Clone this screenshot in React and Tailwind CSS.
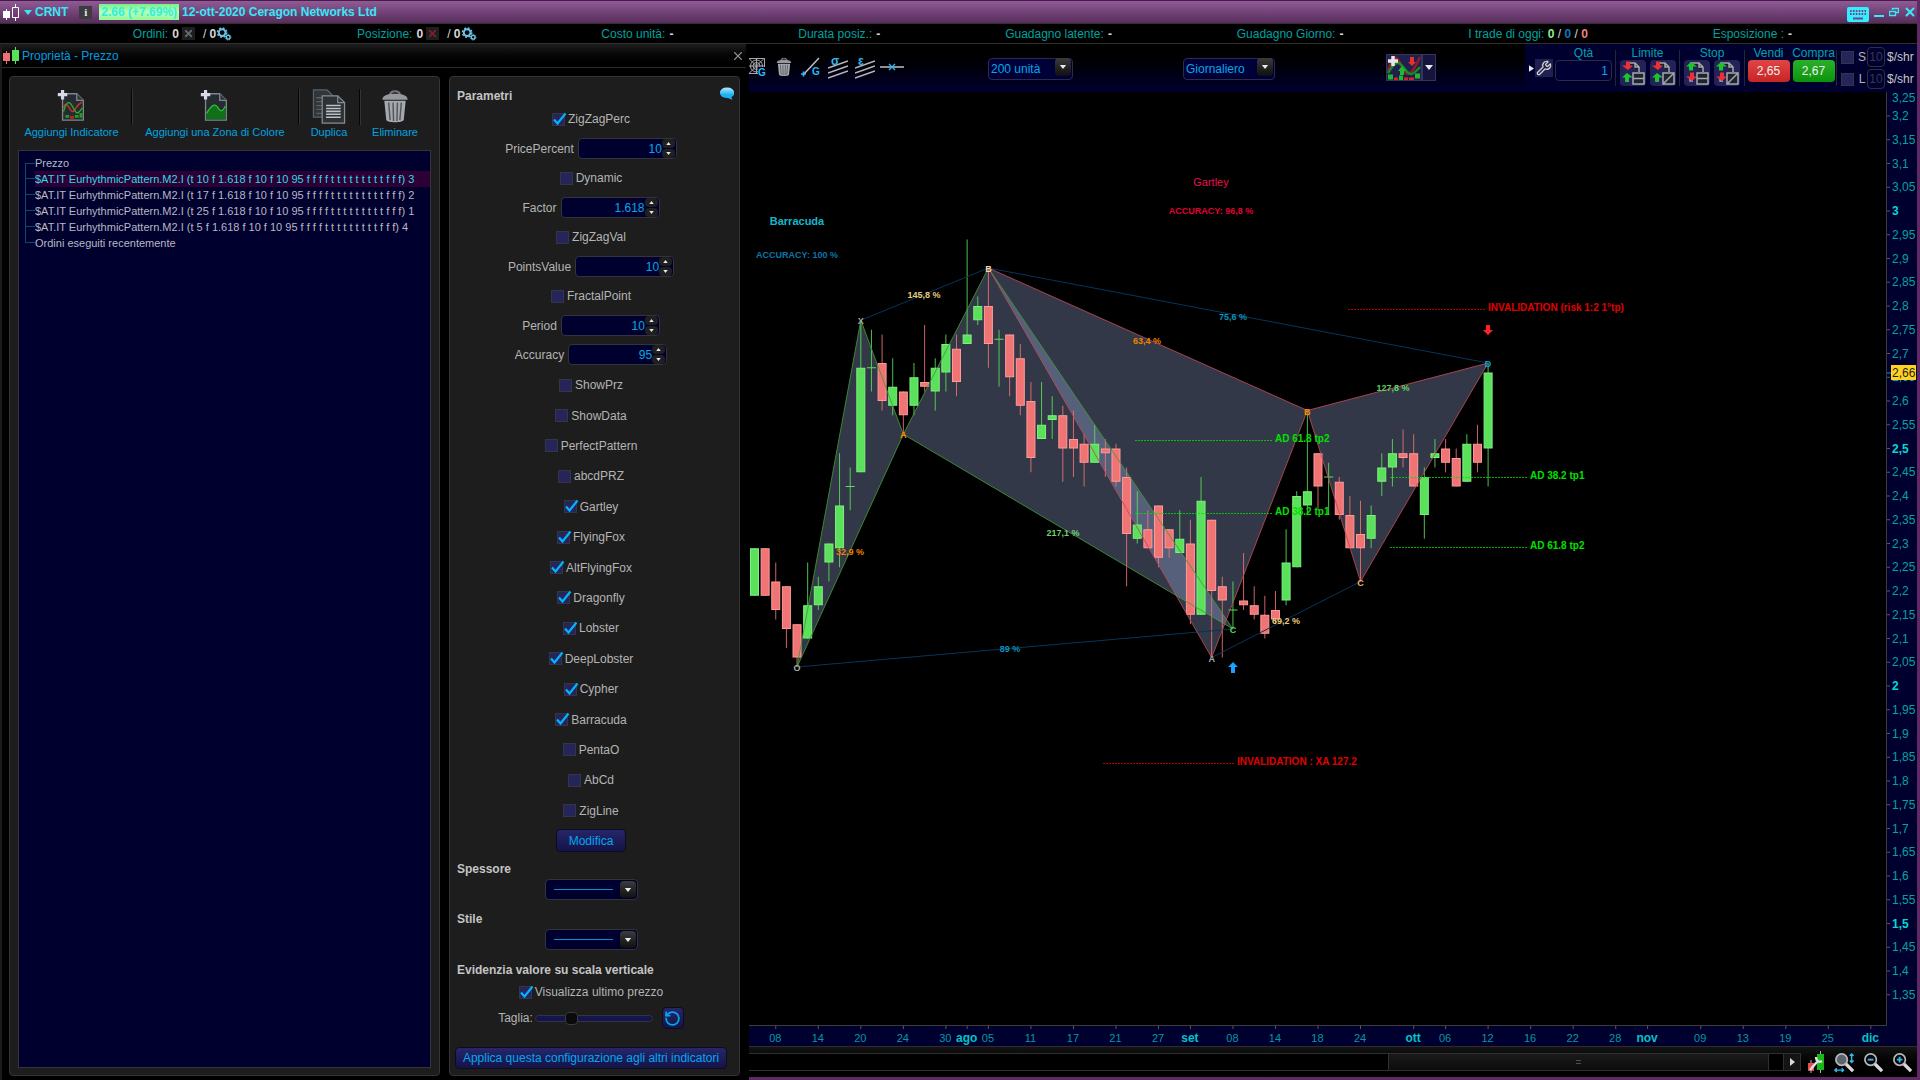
import { useState } from 'react';
import { RotateCcw, Wrench, X } from 'lucide-react';

const START_X = 754.5;
const STEP = 10.632;
const xAt = (i) => START_X + i * STEP;
const yAt = (price) => 211 + (3 - price) * 475;

// open, high, low, close in cents
const CANDLES = [
  [219, 229, 219, 229], [229, 229, 219, 219], [222, 226, 214, 216], [221, 221, 208, 212],
  [213, 213, 204, 206], [210, 226, 210, 217], [217, 223, 216, 221], [226, 230, 222, 230],
  [229, 249, 225, 238], [242, 246, 237, 242], [245, 277, 245, 267], [267, 275, 262, 267],
  [268, 274, 258, 260], [259, 269, 257, 263], [262, 262, 253, 257], [259, 268, 257, 265],
  [264, 276, 262, 263], [262, 269, 258, 267], [266, 274, 262, 272], [271, 274, 261, 264],
  [272, 294, 272, 274], [277, 282, 276, 280], [280, 288, 267, 272], [273, 275, 263, 273],
  [274, 274, 261, 265], [269, 272, 257, 259], [260, 264, 245, 248], [252, 264, 252, 255],
  [256, 261, 252, 257], [257, 259, 243, 250], [252, 258, 244, 250], [251, 253, 242, 247],
  [247, 255, 247, 251], [250, 252, 244, 249], [250, 251, 242, 243], [244, 246, 221, 232],
  [231, 241, 230, 234], [233, 237, 229, 229], [238, 238, 225, 227], [233, 233, 227, 229],
  [228, 237, 228, 231], [230, 235, 213, 215], [215, 244, 215, 239], [235, 235, 206, 220],
  [221, 223, 206, 218], [216, 222, 212, 216], [218, 228, 216, 217], [217, 221, 214, 215],
  [215, 219, 210, 211], [216, 220, 213, 214], [218, 233, 217, 226], [225, 241, 225, 240],
  [238, 258, 236, 241], [249, 249, 237, 242], [244, 247, 236, 244], [243, 244, 235, 236],
  [236, 240, 229, 229], [232, 239, 222, 229], [231, 238, 229, 236], [243, 249, 240, 246],
  [246, 252, 242, 249], [249, 254, 246, 248], [249, 253, 242, 242], [236, 246, 231, 244],
  [248, 252, 246, 249], [250, 252, 245, 247], [248, 250, 242, 242], [243, 253, 243, 251],
  [251, 255, 245, 247], [250, 268, 242, 266],
];

const DATES = [
  [2, '08'], [6, '14'], [10, '20'], [14, '24'], [18, '30'], [20, 'ago'], [22, '05'],
  [26, '11'], [30, '17'], [34, '21'], [38, '27'], [41, 'set'], [45, '08'], [49, '14'],
  [53, '18'], [57, '24'], [62, 'ott'], [65, '06'], [69, '12'], [73, '16'], [77, '22'],
  [81, '28'], [84, 'nov'], [89, '09'], [93, '13'], [97, '19'], [101, '25'], [105, 'dic'],
];

const PRICES = Array.from({ length: 38 }, (_, i) => (320 - i * 5) / 100);

const P = {
  O: [xAt(4), yAt(2.04)],
  X: [xAt(10), yAt(2.77)],
  A: [xAt(14), yAt(2.53)],
  B: [xAt(22), yAt(2.88)],
  C: [xAt(45), yAt(2.12)],
  A2: [xAt(43), yAt(2.06)],
  B2: [xAt(52), yAt(2.58)],
  C2: [xAt(57), yAt(2.22)],
  D: [xAt(69), yAt(2.68)],
};
const pts = (...keys) => keys.map((k) => P[k].join(',')).join(' ');

const POINT_LABELS = [
  ['O', 'O', '#a9a9a9'], ['X', 'X', '#a9a9a9'], ['A', 'A', '#ff8c00'], ['B', 'B', '#f0d8a8'],
  ['C', 'C', '#5ad65a'], ['A2', 'A', '#a9a9a9'], ['B2', 'B', '#ff8c00'], ['C2', 'C', '#e8b860'],
  ['D', 'D', '#00a0d8'],
];

const RATIOS = [
  [924, 298, '145,8 %', '#e8c878'],
  [850, 555, '32,9 %', '#f08000'],
  [1063, 536, '217,1 %', '#6fce6f'],
  [1010, 652, '89 %', '#0b93b8'],
  [1233, 320, '75,6 %', '#0b93b8'],
  [1147, 344, '63,4 %', '#f08000'],
  [1393, 391, '127,8 %', '#5fd35f'],
  [1286, 624, '69,2 %', '#e8c878'],
];

const LEVELS = [
  [1348, 1485, 309, 'INVALIDATION (risk 1:2 1°tp)', '#e00000', 1488],
  [1103, 1234, 763, 'INVALIDATION : XA 127.2', '#e00000', 1237],
  [1135, 1272, 440, 'AD 61.8 tp2', '#00e000', 1275],
  [1135, 1272, 513, 'AD 38.2 tp1', '#00e000', 1275],
  [1390, 1527, 477, 'AD 38.2 tp1', '#00e000', 1530],
  [1390, 1527, 547, 'AD 61.8 tp2', '#00e000', 1530],
];

function Candle({ index, data }) {
  const [open, high, low, close] = data.map((v) => v / 100);
  const x = xAt(index);
  const up = close >= open;
  const color = up ? '#5be05b' : '#f07474';
  const edge = up ? '#7df07d' : '#ff9a9a';
  const top = yAt(Math.max(open, close));
  const bottom = yAt(Math.min(open, close));
  return (
    <g>
      <line x1={x} x2={x} y1={yAt(high)} y2={yAt(low)} stroke={color} strokeOpacity="0.85" />
      {open === close ? (
        <line x1={x - 4.5} x2={x + 4.5} y1={top} y2={top} stroke={color} />
      ) : (
        <rect x={x - 4} y={top + 0.5} width="8" height={bottom - top - 1} fill={color} stroke={edge} />
      )}
    </g>
  );
}

function Chart() {
  return (
    <svg
      className="block h-full w-full font-['Liberation_Sans',sans-serif]"
      viewBox="749 92 1168 954"
      preserveAspectRatio="xMinYMin slice"
    >
      <rect x="749" y="92" width="1168" height="954" fill="#00002e" />
      <rect x="748.5" y="91.5" width="1138" height="934" fill="#000" stroke="#3c3c3c" />

      <g fill="#b3c8fe" fillOpacity="0.28">
        <polygon points={pts('O', 'X', 'A')} />
        <polygon points={pts('A', 'B', 'C')} />
        <polygon points={pts('B', 'A2', 'B2')} />
        <polygon points={pts('B2', 'C2', 'D')} />
      </g>

      {CANDLES.map((c, i) => (
        <Candle key={i} index={i} data={c} />
      ))}

      <g fill="none" stroke="#06355a">
        <polyline points={pts('X', 'B')} />
        <polyline points={pts('B', 'D')} />
        <polyline points={pts('O', 'C')} />
        <polyline points={pts('A2', 'C2')} />
      </g>
      <g fill="none" stroke="#3f9a35" strokeOpacity="0.85">
        <polygon points={pts('O', 'X', 'A')} />
        <polygon points={pts('A', 'B', 'C')} />
      </g>
      <g fill="none" stroke="#c04a58" strokeOpacity="0.85">
        <polygon points={pts('B', 'A2', 'B2')} />
        <polygon points={pts('B2', 'C2', 'D')} />
      </g>

      <g className="text-[10px] font-bold">
        {LEVELS.map(([x1, x2, y, label, color, tx]) => (
          <g key={`${tx}-${y}`}>
            <line x1={x1} x2={x2} y1={y + 0.5} y2={y + 0.5} stroke={color} strokeOpacity="0.8" strokeDasharray="2 1" />
            <text x={tx} y={y + 2} fill={color}>{label}</text>
          </g>
        ))}
      </g>

      <g className="text-[9px] font-bold" textAnchor="middle">
        {RATIOS.map(([x, y, label, color]) => (
          <text key={label} x={x} y={y} fill={color}>{label}</text>
        ))}
        <text x="797" y="258" fill="#0b76a8">ACCURACY: 100 %</text>
        <text x="1211" y="214" fill="#e00030">ACCURACY: 96,8 %</text>
        {POINT_LABELS.map(([key, label, color]) => (
          <text key={key} x={P[key][0]} y={P[key][1] + 4} fill={color}>{label}</text>
        ))}
      </g>
      <g className="text-[11px]" textAnchor="middle">
        <text x="797" y="225" fill="#14b8cc" className="font-bold">Barracuda</text>
        <text x="1211" y="186" fill="#e8104c">Gartley</text>
      </g>
      <path d="M1233 662l5 5h-3v6h-4v-6h-3z" fill="#1aa0ff" />
      <path d="M1488 335l5-5h-3v-5h-4v5h-3z" fill="#ff2222" />

      <g className="text-[12px]">
        <text x="1892" y="102" fill="#00a4a4">3,25</text>
        {PRICES.map((p) => {
          const major = p % 0.5 === 0;
          return (
            <g key={p}>
              <line x1="1887" x2="1890" y1={yAt(p)} y2={yAt(p)} stroke="#5a5a5a" />
              <text
                x="1892"
                y={yAt(p) + 4}
                fill={major ? '#00d8d8' : '#00a4a4'}
                className={major ? 'font-bold' : ''}
              >
                {String(p).replace('.', ',')}
              </text>
            </g>
          );
        })}
        <line x1="1887" x2="1891" y1="373" y2="373" stroke="#00a0c8" />
        <rect x="1891" y="365" width="25" height="15" fill="#ffd21f" />
        <text x="1892" y="377" fill="#1c1c1c">2,66</text>
      </g>

      <g textAnchor="middle">
        {DATES.map(([i, label]) => {
          const month = label.length === 3;
          return (
            <g key={i}>
              <line x1={xAt(i)} x2={xAt(i)} y1="1026" y2="1029" stroke="#5a5a5a" />
              <text
                x={xAt(i) - 0.5}
                y="1042"
                fill={month ? '#00c4c8' : '#009aa2'}
                className={month ? 'text-[12px] font-bold' : 'text-[11px]'}
              >
                {label}
              </text>
            </g>
          );
        })}
      </g>
    </svg>
  );
}

function Check({ id, label, checked = false }) {
  return (
    <label className="flex items-center justify-center gap-[3px] text-[#b4b4b4]" htmlFor={id}>
      <span className="relative flex h-[13px] w-[13px]">
        <input
          id={id}
          type="checkbox"
          defaultChecked={checked}
          className="peer h-[13px] w-[13px] appearance-none border border-[#35354a] bg-[#25255a]"
        />
        <svg
          className="pointer-events-none absolute -top-px left-0 hidden h-[14px] w-[15px] peer-checked:block"
          viewBox="0 0 15 14"
          fill="none"
          stroke="#00b4ff"
          strokeWidth="2.2"
        >
          <path d="M2 7.5l3.5 4L13.5 1.5" />
        </svg>
      </span>
      {label}
    </label>
  );
}

function Spinner({ id, label, value }) {
  const [text, setText] = useState(value);
  const places = value.includes('.') ? 3 : 0;
  const bump = (d) => setText((t) => (Number(t) + d).toFixed(places));
  return (
    <div className="flex h-[29px] items-center justify-center gap-1">
      <label htmlFor={id} className="text-[#b4b4b4]">{label}</label>
      <div className="flex h-[21px] w-[99px] items-center rounded-sm border border-[#33333c] bg-[#00002e] pr-px">
        <input
          id={id}
          value={text}
          onChange={(e) => setText(e.target.value)}
          className="w-full min-w-0 bg-transparent text-right text-[#00a8e8] outline-none"
        />
        <div className="flex flex-col gap-px">
          {[1, -1].map((d) => (
            <button
              key={d}
              type="button"
              aria-label={`${label} ${d > 0 ? '+' : '-'}`}
              onClick={() => bump(d)}
              className="flex h-[9px] w-[13px] items-center justify-center rounded-sm bg-[#202022]"
            >
              <svg viewBox="0 0 6 4" className="h-[3px] w-[5px] fill-[#e8e8e8]">
                <path d={d > 0 ? 'M0 4l3-4 3 4z' : 'M0 0l3 4 3-4z'} />
              </svg>
            </button>
          ))}
        </div>
      </div>
    </div>
  );
}

function ArrowBox() {
  return (
    <span className="pointer-events-none absolute top-[2px] right-[2px] bottom-[2px] flex w-[16px] items-center justify-center rounded-sm bg-gradient-to-b from-[#3c3c3c] to-[#101010]">
      <svg viewBox="0 0 8 5" className="h-[4px] w-[8px] fill-[#e8e8e8]">
        <path d="M0 0h8L4 5z" />
      </svg>
    </span>
  );
}

function LineSelect({ label }) {
  return (
    <div className="relative mx-auto h-[21px] w-[93px]">
      <select aria-label={label} className="h-full w-full appearance-none rounded-sm border border-[#33333c] bg-[#00002e]">
        <option value="1" />
      </select>
      <span className="pointer-events-none absolute top-[10px] left-[9px] h-px w-[59px] bg-[#0094d0]" />
      <ArrowBox />
    </div>
  );
}

function TextSelect({ label, value, className }) {
  return (
    <div className={`relative h-[22px] shrink-0 ${className}`}>
      <select
        aria-label={label}
        className="h-full w-full appearance-none rounded-sm border border-[#2c2c48] bg-[#000038] pl-[2px] text-[12px] text-[#00a8e8]"
      >
        <option>{value}</option>
      </select>
      <ArrowBox />
    </div>
  );
}

function PageIcon({ children }) {
  return (
    <svg viewBox="0 0 30 36" className="h-[34px] w-[30px]" fill="none">
      <path d="M5 5h15l7 7v21H5z" fill="#252b30" stroke="#7c858c" strokeWidth="1.4" />
      <path d="M20 5v7h7" fill="#30363c" stroke="#7c858c" strokeWidth="1.4" />
      {children}
      <path d="M0 6h10M5 1v10" stroke="#d8d8e8" strokeWidth="3.4" />
    </svg>
  );
}

function TrashIcon({ className }) {
  return (
    <svg viewBox="0 0 28 36" className={className} fill="none">
      <path d="M9 6c0-5 10-5 10 0" stroke="#76767e" strokeWidth="2" />
      <path d="M1 11c0-4 5-6 13-6s13 2 13 6z" fill="#96989e" />
      <path d="M3 12h22l-2 20c-1 3-17 3-18 0z" fill="#a5a8ae" />
      <path d="M7.5 14l1.5 18M12 14l.5 19M16.5 14l-.5 19M20.5 14l-1.5 18" stroke="#54565c" strokeWidth="1.5" />
    </svg>
  );
}

function TreePanel() {
  const rows = [
    'Prezzo',
    '$AT.IT EurhythmicPattern.M2.I (t 10 f 1.618 f 10 f 10 95 f f f f t t t t t t t t t f f f) 3',
    '$AT.IT EurhythmicPattern.M2.I (t 17 f 1.618 f 10 f 10 95 f f f f t t t t t t t t t f f f) 2',
    '$AT.IT EurhythmicPattern.M2.I (t 25 f 1.618 f 10 f 10 95 f f f f t t t t t t t t t f f f) 1',
    '$AT.IT EurhythmicPattern.M2.I (t 5 f 1.618 f 10 f 10 95 f f f f t t t t t t t t t f f f) 4',
    'Ordini eseguiti recentemente',
  ];
  const tool = 'flex h-[50px] flex-col items-center justify-between text-[11px] leading-[14px] text-[#00a4e0]';
  const divider = 'h-[36px] w-px bg-[#050505] shadow-[1px_0_0_#333]';
  return (
    <section className="flex w-[431px] flex-col rounded-sm border border-[#353535] bg-[#1d1d1d] px-[8px] pb-[7px]">
      <div className="mt-[12px] -ml-[6px] flex">
        <button type="button" className={`${tool} w-[119px]`}>
          <PageIcon>
            <path d="M6 20c4-12 7 8 11 3s5-8 9-9" stroke="#d03030" strokeWidth="1.5" />
            <path d="M6 24c5-18 9-6 12-1s5 1 8-3" stroke="#28b028" strokeWidth="1.5" />
            <path d="M8 29h4M18 29h4" stroke="#20a020" strokeWidth="3" />
            <path d="M13 30h4" stroke="#c02020" strokeWidth="3" />
            <path d="M23 28h3" stroke="#20a020" strokeWidth="5" />
          </PageIcon>
          Aggiungi Indicatore
        </button>
        <span className={divider} />
        <button type="button" className={`${tool} w-[166px]`}>
          <PageIcon>
            <path d="M6 32V26c7-12 10-10 13-5 2 3 4 3 7-3v14z" fill="#107018" />
            <path d="M6 26c7-12 10-10 13-5 2 3 4 3 7-3" stroke="#30c038" strokeWidth="1.3" />
          </PageIcon>
          Aggiungi una Zona di Colore
        </button>
        <span className={divider} />
        <button type="button" className={`${tool} w-[60px]`}>
          <svg viewBox="0 0 34 36" className="h-[35px] w-[34px]" fill="none" stroke="#858c92" strokeWidth="1.3">
            <path d="M1 1h14l6 6v22H1z" fill="#30363a" stroke="#5a6066" />
            <path d="M4 9h8M4 13h8M4 17h8M4 21h8M4 25h8" stroke="#5a6066" />
            <path d="M10 7h16l7 7v21H10z" fill="#2c3236" />
            <path d="M26 7v7h7" />
            <path d="M14 17h15M14 20h15M14 23h15M14 26h15M14 29h15" stroke="#bcc0c4" strokeWidth="1.6" />
          </svg>
          Duplica
        </button>
        <span className={divider} />
        <button type="button" className={`${tool} w-[70px]`}>
          <TrashIcon className="h-[35px] w-[28px]" />
          Eliminare
        </button>
      </div>
      <ul className="mt-[11px] flex-1 border border-[#34343c] bg-[#00002e] pt-[4px] text-[11px] leading-[16px] whitespace-nowrap text-[#b8b8c4]">
        {rows.map((row, i) => (
          <li key={row} className="flex h-[16px] pl-[6px]">
            <span className="flex w-[10px] flex-col">
              <span
                className={
                  i === 0
                    ? 'mt-[8px] flex-1 border-t border-l border-[#0c4a6c]'
                    : 'h-[8px] border-b border-l border-[#0c4a6c]'
                }
              />
              {i > 0 && i < rows.length - 1 && <span className="flex-1 border-l border-[#0c4a6c]" />}
            </span>
            <span className={i === 1 ? 'flex-1 bg-[#2c0034] text-[#2fd8e8]' : 'flex-1'}>{row}</span>
          </li>
        ))}
      </ul>
    </section>
  );
}

const FLAGS = [
  ['ShowPrz', false], ['ShowData', false], ['PerfectPattern', false], ['abcdPRZ', false],
  ['Gartley', true], ['FlyingFox', true], ['AltFlyingFox', true], ['Dragonfly', true],
  ['Lobster', true], ['DeepLobster', true], ['Cypher', true], ['Barracuda', true],
  ['PentaO', false], ['AbCd', false], ['ZigLine', false],
];

function ParamsPanel() {
  const button = 'rounded-sm border border-[#0c0c20] bg-gradient-to-b from-[#26266a] to-[#141448] text-[#00a8f0]';
  const heading = 'pl-[2px] text-[12px] leading-[16px] font-bold text-[#c4c4c4]';
  return (
    <section className="relative flex w-[291px] flex-col rounded-sm border border-[#353535] bg-[#1d1d1d] pt-[11px] pr-[12px] pb-[6px] pl-[5px]">
      <svg viewBox="0 0 16 14" className="absolute top-[10px] right-[5px] h-[13px] w-[14px]">
        <defs>
          <linearGradient id="bubble" x2="0" y2="1">
            <stop stopColor="#b8ecff" />
            <stop offset="0.6" stopColor="#20b0f0" />
          </linearGradient>
        </defs>
        <path d="M8 0c10 0 10 10 5 11l1 3-5-2C-3 13-3 0 8 0z" fill="url(#bubble)" />
      </svg>
      <h2 className={heading}>Parametri</h2>
      <div className="grid [&>label]:h-[30px]">
        <Check id="zzp" label="ZigZagPerc" checked />
        <Spinner id="pp" label="PricePercent" value="10" />
        <Check id="dyn" label="Dynamic" />
        <Spinner id="fac" label="Factor" value="1.618" />
        <Check id="zzv" label="ZigZagVal" />
        <Spinner id="pv" label="PointsValue" value="10" />
        <Check id="frp" label="FractalPoint" />
        <Spinner id="per" label="Period" value="10" />
        <Spinner id="acc" label="Accuracy" value="95" />
      </div>
      <div className="mt-px grid h-[456px] auto-rows-fr">
        {FLAGS.map(([name, on]) => (
          <Check key={name} id={name} label={name} checked={on} />
        ))}
      </div>
      <button type="button" className={`${button} mx-auto mt-[3px] h-[23px] w-[70px]`}>Modifica</button>
      <h2 className={`${heading} mt-[9px]`}>Spessore</h2>
      <div className="mt-[2px]">
        <LineSelect label="Spessore" />
      </div>
      <h2 className={`${heading} mt-[11px]`}>Stile</h2>
      <div className="mt-[2px]">
        <LineSelect label="Stile" />
      </div>
      <h2 className={`${heading} mt-[12px]`}>Evidenzia valore su scala verticale</h2>
      <div className="mt-[5px]">
        <Check id="last" label="Visualizza ultimo prezzo" checked />
      </div>
      <div className="mt-[6px] flex items-center justify-center gap-[2px]">
        <label htmlFor="size" className="text-[#b4b4b4]">Taglia:</label>
        <input
          id="size"
          type="range"
          min="0"
          max="100"
          defaultValue="28"
          className="h-[7px] w-[118px] appearance-none rounded-full border border-[#34343c] bg-[#14144e] [&::-webkit-slider-thumb]:h-[13px] [&::-webkit-slider-thumb]:w-[13px] [&::-webkit-slider-thumb]:appearance-none [&::-webkit-slider-thumb]:rounded-sm [&::-webkit-slider-thumb]:border [&::-webkit-slider-thumb]:border-[#3a3a3a] [&::-webkit-slider-thumb]:bg-[#0a0a0a]"
        />
        <button type="button" aria-label="Ripristina" className={`${button} ml-[7px] flex h-[22px] w-[22px] items-center justify-center`}>
          <RotateCcw size={17} strokeWidth={2.5} />
        </button>
      </div>
      <button type="button" className={`${button} mt-auto h-[22px]`}>
        Applica questa configurazione agli altri indicatori
      </button>
    </section>
  );
}

function PropertiesDialog() {
  return (
    <aside className="flex w-[749px] shrink-0 flex-col border-l-2 border-[#1c1c1c] bg-black pr-[9px] pb-[4px] text-[12px]">
      <header className="-mr-[6px] flex h-[24px] items-center border-b border-[#2c2c2c] bg-gradient-to-b from-[#1e1e1e] to-black text-[#009ce0]">
        <svg viewBox="0 0 17 18" className="mr-[3px] h-[18px] w-[17px]">
          <path d="M4.5 4v13" stroke="#f07070" />
          <path d="M1 6h7v8H1z" fill="#f07070" />
          <path d="M13.5 0v17" stroke="#58e058" />
          <path d="M10 3h7v11h-7z" fill="#58e058" />
        </svg>
        <h1 className="flex-1">Proprietà - Prezzo</h1>
        <button type="button" aria-label="Chiudi" className="mr-px text-[#8c8c8c]">
          <X size={14} strokeWidth={2} />
        </button>
      </header>
      <div className="flex min-h-0 flex-1 justify-between pt-[8px] pl-[7px]">
        <TreePanel />
        <ParamsPanel />
      </div>
    </aside>
  );
}

function Gears() {
  return (
    <svg viewBox="0 0 16 15" className="h-[14px] w-[16px]" fill="none" stroke="#6cc4ec">
      <circle cx="6" cy="6" r="3.6" strokeWidth="2" />
      <circle cx="6" cy="6" r="5" strokeWidth="1.6" strokeDasharray="2 1.93" />
      <circle cx="12.5" cy="11" r="2" strokeWidth="1.5" />
      <circle cx="12.5" cy="11" r="3" strokeDasharray="1.2 1.1" />
    </svg>
  );
}

function Closer({ className }) {
  return (
    <button type="button" aria-label="Chiudi tutto" className={`mr-[8px] ml-[3px] flex h-[13px] w-[13px] items-center justify-center bg-[#1c1f22] ${className}`}>
      <X size={11} strokeWidth={4} />
    </button>
  );
}

function StatsBar() {
  const dash = <b className="ml-[4px] text-[#d8d8d8]">-</b>;
  return (
    <div className="flex h-[21px] items-center justify-evenly border-y border-[#303030] bg-black pl-[8px] text-[12px] whitespace-nowrap text-[#00a29e]">
      <div className="flex items-center">
        Ordini:<b className="ml-[4px] text-[#d8d8d8]">0</b>
        <Closer className="text-[#60686c]" />
        <span className="text-[#d8d8d8]">/ <b>0</b></span>
        <Gears />
      </div>
      <div className="flex items-center">
        Posizione:<b className="ml-[4px] text-[#d8d8d8]">0</b>
        <Closer className="text-[#7c2024]" />
        <span className="text-[#d8d8d8]">/ <b>0</b></span>
        <Gears />
      </div>
      <div>Costo unità:{dash}</div>
      <div>Durata posiz.:{dash}</div>
      <div>Guadagno latente:{dash}</div>
      <div>Guadagno Giorno:{dash}</div>
      <div>
        I trade di oggi: <b className="text-[#8cf08c]">0</b> <span className="text-[#d8d8d8]">/</span>{' '}
        <b className="text-[#0878c0]">0</b> <span className="text-[#d8d8d8]">/</span>{' '}
        <b className="text-[#f08080]">0</b>
      </div>
      <div>Esposizione :{dash}</div>
    </div>
  );
}

function TitleBar() {
  return (
    <div className="flex h-[23px] items-center border-t border-[#4c1850] bg-gradient-to-b from-[#8e5c94] to-[#582c5c] text-[12px] font-bold text-[#38e8f8]">
      <svg viewBox="0 0 18 17" className="ml-[3px] h-[17px] w-[18px]">
        <path d="M3.5 5v11" stroke="#fff" />
        <path d="M0 7h7v7H0z" fill="#fff" />
        <path d="M12.5 0v3M12.5 14v3M9.5 3.5h6v10h-6z" stroke="#fff" fill="none" />
      </svg>
      <svg viewBox="0 0 8 5" className="mx-[3px] h-[5px] w-[8px] fill-[#38e8f8]">
        <path d="M0 0h8L4 5z" />
      </svg>
      CRNT
      <button type="button" className="ml-[11px] h-[13px] w-[13px] bg-[#3c3c40] font-['Liberation_Serif',serif] text-[11px] leading-[13px] text-[#e8e8e8]">
        i
      </button>
      <span className="mr-[3px] ml-[7px] h-[16px] bg-gradient-to-b from-[#78f088] via-[#b4ffb4] to-[#98f898] px-[2px] leading-[16px] text-[#30f0e0]">
        2.66 (+7.69%)
      </span>
      <span className="flex-1">12-ott-2020 Ceragon Networks Ltd</span>
      <button type="button" aria-label="Tastiera" className="mt-[4px]">
        <svg viewBox="0 0 22 15" className="h-[15px] w-[22px]">
          <rect width="22" height="15" rx="2" fill="#30f0ff" />
          <path d="M3 4h16M3 7h16" stroke="#803c88" strokeWidth="1.8" strokeDasharray="1.6 1.3" />
          <path d="M6 11.5h10" stroke="#803c88" strokeWidth="2" />
        </svg>
      </button>
      <button type="button" aria-label="Riduci" className="mt-[7px] ml-[5px] h-[2px] w-[10px] bg-[#38e8f8]" />
      <button type="button" aria-label="Ripristina finestra" className="ml-[5px]">
        <svg viewBox="0 0 10 10" className="h-[10px] w-[10px]" fill="none" stroke="#38e8f8">
          <path d="M3.5 3V1.5h6v4H7M3.5 1.5h6" strokeWidth="1.4" />
          <path d="M.5 4.5h6v4h-6z" strokeWidth="1.4" />
        </svg>
      </button>
      <button type="button" aria-label="Chiudi finestra" className="ml-[4px]">
        <X size={14} strokeWidth={3.5} />
      </button>
    </div>
  );
}

function OrderIcon({ first, second, slash }) {
  return (
    <button type="button" aria-label="Ordine" className="flex h-[26px] w-[26px] items-center justify-center rounded-sm bg-[#23235a]">
      <svg viewBox="0 0 26 26" className="h-[26px] w-[26px]" fill="none" stroke="#a8a8a8" strokeWidth="1.5">
        <path d="M9 3h6l4 4v5M15 3v4h4M9 21H6v-3M6 3h4" fill="#1c2024" />
        <path d="M6 1.500h4v4h3L8 10 2 5.500h4z" fill={first} stroke="none" transform={first === '#18c828' ? 'rotate(180 7.5 6)' : undefined} />
        <path d="M6 12.500h4v4h3L8 21 2 16.500h4z" fill={second} stroke="none" transform={second === '#18c828' ? 'rotate(180 7.5 17)' : undefined} />
        <path d="M13 13h11v11H13z" fill="#1c2430" />
        <path d={slash ? 'M13 24L24 13' : 'M13 18.500h11'} />
      </svg>
    </button>
  );
}

function OrderBar() {
  const sep = 'mt-[6px] h-[36px] w-px bg-[#28282c]';
  const col = 'flex flex-col items-center';
  const label = 'flex h-[16px] items-end leading-[14px]';
  return (
    <div className="flex h-full w-[392px] shrink-0 bg-[#00002e] pl-[4px] text-[12px] text-[#00a0b0]">
      <svg viewBox="0 0 6 8" className="mt-[21px] mr-px h-[7px] w-[5px] fill-[#e8e8e8]">
        <path d="M0 0l6 4-6 4z" />
      </svg>
      <button type="button" aria-label="Impostazioni" className="mt-[15px] flex h-[18px] w-[18px] items-center justify-center bg-[#202050] text-[#d0d0d0]">
        <Wrench size={16} />
      </button>
      <div className={`${col} mr-[3px] ml-[2px] w-[57px]`}>
        <label htmlFor="qty" className={label}>Qtà</label>
        <input id="qty" defaultValue="1" className="h-[21px] w-[57px] rounded-sm border border-[#2c2c40] bg-[#000034] px-[3px] text-right text-[#00a8f0]" />
      </div>
      <span className={sep} />
      <div className={`${col} w-[63px]`}>
        <span className={label}>Limite</span>
        <div className="flex gap-[4px]">
          <OrderIcon first="#f03030" second="#18c828" />
          <OrderIcon first="#f03030" second="#18c828" slash />
        </div>
      </div>
      <span className={sep} />
      <div className={`${col} w-[64px]`}>
        <span className={label}>Stop</span>
        <div className="flex gap-[4px]">
          <OrderIcon first="#18c828" second="#f03030" />
          <OrderIcon first="#18c828" second="#f03030" slash />
        </div>
      </div>
      <span className={sep} />
      <div className={`${col} ml-[2px] w-[43px]`}>
        <span className={label}>Vendi</span>
        <button type="button" className="h-[22px] w-[42px] rounded-sm bg-gradient-to-b from-[#e04444] to-[#c82424] text-[#f0f0f0]">2,65</button>
      </div>
      <div className={`${col} mr-px ml-[2px] w-[43px]`}>
        <span className={label}>Compra</span>
        <button type="button" className="h-[22px] w-[42px] rounded-sm bg-gradient-to-b from-[#28b028] to-[#089408] text-[#f0f0f0]">2,67</button>
      </div>
      <span className={sep} />
      <div className="ml-[4px] flex flex-col gap-[2px] pt-[3px] text-[#c8c8c8]">
        {['S', 'L'].map((k) => (
          <div key={k} className="flex h-[20px] items-center">
            <Check id={`ord-${k}`} label={<span className="w-[10px] text-center">{k}</span>} />
            <input aria-label={`${k} $/shr`} defaultValue="10" className="mr-[2px] h-[20px] w-[18px] rounded-sm border border-[#303038] bg-transparent text-center text-[#383850]" />
            $/shr
          </div>
        ))}
      </div>
    </div>
  );
}

function Toolbar() {
  return (
    <div className="flex h-[48px] bg-gradient-to-b from-black to-[#000030]">
      <div className="flex min-w-0 flex-1 items-center pb-[2px]">
        <button type="button" aria-label="Gann">
          <svg viewBox="0 0 18 22" className="h-[22px] w-[18px]" fill="none" stroke="#a8a8a8">
            <path d="M0 2.500h15.500v15H0M0 2.500l15 15M15 2.500l-15 15M0 10h15M7.500 2.500v15" />
            <circle cx="7.5" cy="10" r="3.5" />
            <circle cx="7.5" cy="10" r="6" />
            <rect x="9" y="11" width="9" height="11" fill="#00001c" stroke="none" />
            <text x="9" y="20" fill="#30b8f0" stroke="none" className="text-[10px] font-bold">G</text>
          </svg>
        </button>
        <button type="button" aria-label="Elimina oggetti" className="ml-[9px]">
          <TrashIcon className="h-[20px] w-[16px]" />
        </button>
        <button type="button" aria-label="Linea" className="ml-[9px]">
          <svg viewBox="0 0 20 22" className="h-[22px] w-[20px]" fill="none">
            <path d="M2 19L18 2" stroke="#c0c0c0" strokeWidth="1.5" />
            <path d="M0 18h5M2.500 15.500v5" stroke="#30b8f0" strokeWidth="1.6" />
            <text x="11" y="19" fill="#30b8f0" className="text-[10px] font-bold">G</text>
          </svg>
        </button>
        {['σ', 'ε'].map((s) => (
          <button key={s} type="button" aria-label={`Canale ${s}`} className="ml-[7px]">
            <svg viewBox="0 0 20 28" className="h-[28px] w-[20px]" fill="none">
              <path d="M0 15l20-7M0 20l20-7M0 25l20-7" stroke="#b8b8b8" strokeWidth="1.6" />
              <text x="3" y="12" fill="#30b8f0" className="text-[12px] leading-none font-bold">{s}</text>
            </svg>
          </button>
        ))}
        <button type="button" aria-label="Linea orizzontale" className="ml-[5px]">
          <svg viewBox="0 0 24 8" className="h-[8px] w-[24px]" fill="none">
            <path d="M0 4h24" stroke="#c0c0c0" strokeWidth="1.5" />
            <path d="M9 1l6 6M15 1L9 7" stroke="#30b8f0" strokeWidth="1.3" />
          </svg>
        </button>
        <div className="ml-[84px]">
          <TextSelect label="Unità" value="200 unità" className="w-[85px]" />
        </div>
        <div className="ml-[110px]">
          <TextSelect label="Periodo" value="Giornaliero" className="w-[92px]" />
        </div>
        <div className="mr-[89px] ml-auto flex h-[27px]">
          <button type="button" aria-label="Indicatori" className="w-[36px] border border-[#34345c] bg-[#20204c]">
            <svg viewBox="0 0 34 25" className="h-[25px] w-[34px]" fill="none">
              <path d="M1 16c6-18 9-16 14-4s10 8 18-10" stroke="#901c28" strokeWidth="2.5" />
              <path d="M1 18c6-10 10-14 16-5s9 7 16-1" stroke="#188828" strokeWidth="2.5" />
              <path d="M1 6h10M6 1v10" stroke="#e8e8e8" strokeWidth="3.5" />
              <path d="M11 16l4-5 4 5h-2v4h-4v-4z" fill="#20b830" />
              <path d="M25 11l-4-4h2V2h4v5h2z" fill="#e83030" />
              <path d="M1 22h5M12 23h4M28 21h5" stroke="#20b830" strokeWidth="5" />
              <path d="M7 24h4M17 24h4M22 24h5" stroke="#d02828" strokeWidth="3" />
            </svg>
          </button>
          <button type="button" aria-label="Altri indicatori" className="flex w-[14px] items-center justify-center border border-[#34345c] bg-[#14143c]">
            <svg viewBox="0 0 8 5" className="h-[5px] w-[8px] fill-[#e8e8e8]">
              <path d="M0 0h8L4 5z" />
            </svg>
          </button>
        </div>
      </div>
      <OrderBar />
    </div>
  );
}

function Magnifier({ children, fill = 'none' }) {
  return (
    <svg viewBox="0 0 22 22" className="h-[21px] w-[21px]" fill="none">
      <path d="M12 12l8 8" stroke="#d8d8d8" strokeWidth="3.5" />
      <circle cx="8" cy="8" r="6" stroke="#b8b8b8" strokeWidth="1.8" fill={fill} />
      {children}
    </svg>
  );
}

function BottomBar() {
  return (
    <div className="flex h-[31px] items-center border-t border-[#2c2c2c] bg-gradient-to-b from-[#141414] to-black pr-[4px]">
      <div className="flex h-[18px] flex-1 border-y border-[#303030] bg-black">
        <div className="flex-[640]" />
        <div className="flex flex-[380] items-center justify-center border-x border-[#303030] bg-gradient-to-b from-[#1a1a1a] to-[#0c0c0c]">
          <span className="h-[4px] w-[5px] border-y border-[#505050]" />
        </div>
        <div className="w-[14px]" />
      </div>
      <button type="button" aria-label="Scorri a destra" className="flex h-[18px] w-[18px] items-center justify-center border border-[#303030] bg-[#141414]">
        <svg viewBox="0 0 5 8" className="h-[8px] w-[5px] fill-[#d8d8d8]">
          <path d="M0 0l5 4-5 4z" />
        </svg>
      </button>
      <button type="button" aria-label="Stile grafico" className="ml-[6px]">
        <svg viewBox="0 0 18 22" className="h-[22px] w-[18px]" fill="none">
          <path d="M4 9v13" stroke="#b0b0b0" />
          <path d="M1 12h6v8H1z" fill="#e05050" />
          <path d="M13.500 0v22" stroke="#b0b0b0" />
          <path d="M10 3h7v16h-7z" fill="#18b818" />
          <path d="M3 19l7-8M9 6c0 4 3 6 6 4" stroke="#e0e0e0" strokeWidth="2.5" />
        </svg>
      </button>
      <button type="button" aria-label="Adatta" className="ml-[9px]">
        <Magnifier fill="#5c6470">
          <path d="M18.500 2v9M16.500 4l2-2 2 2M16.500 9l2 2 2-2M1 19h9M3 17l-2 2 2 2M8 17l2 2-2 2" stroke="#30b8f0" strokeWidth="1.5" />
        </Magnifier>
      </button>
      <button type="button" aria-label="Riduci zoom" className="ml-[8px]">
        <Magnifier>
          <path d="M5 8h6" stroke="#30b8f0" strokeWidth="2" />
        </Magnifier>
      </button>
      <button type="button" aria-label="Aumenta zoom" className="ml-[8px]">
        <Magnifier>
          <path d="M5 8h6M8 5v6" stroke="#30b8f0" strokeWidth="2" />
        </Magnifier>
      </button>
    </div>
  );
}

export default function App() {
  return (
    <div className="flex h-screen flex-col overflow-hidden border-r-[3px] border-[#602864] bg-black font-['Liberation_Sans',Arial,sans-serif]">
      <TitleBar />
      <StatsBar />
      <div className="flex min-h-0 flex-1">
        <PropertiesDialog />
        <main className="flex min-w-0 flex-1 flex-col border-b-[3px] border-[#602864]">
          <Toolbar />
          <div className="min-h-0 flex-1">
            <Chart />
          </div>
          <BottomBar />
        </main>
      </div>
    </div>
  );
}
